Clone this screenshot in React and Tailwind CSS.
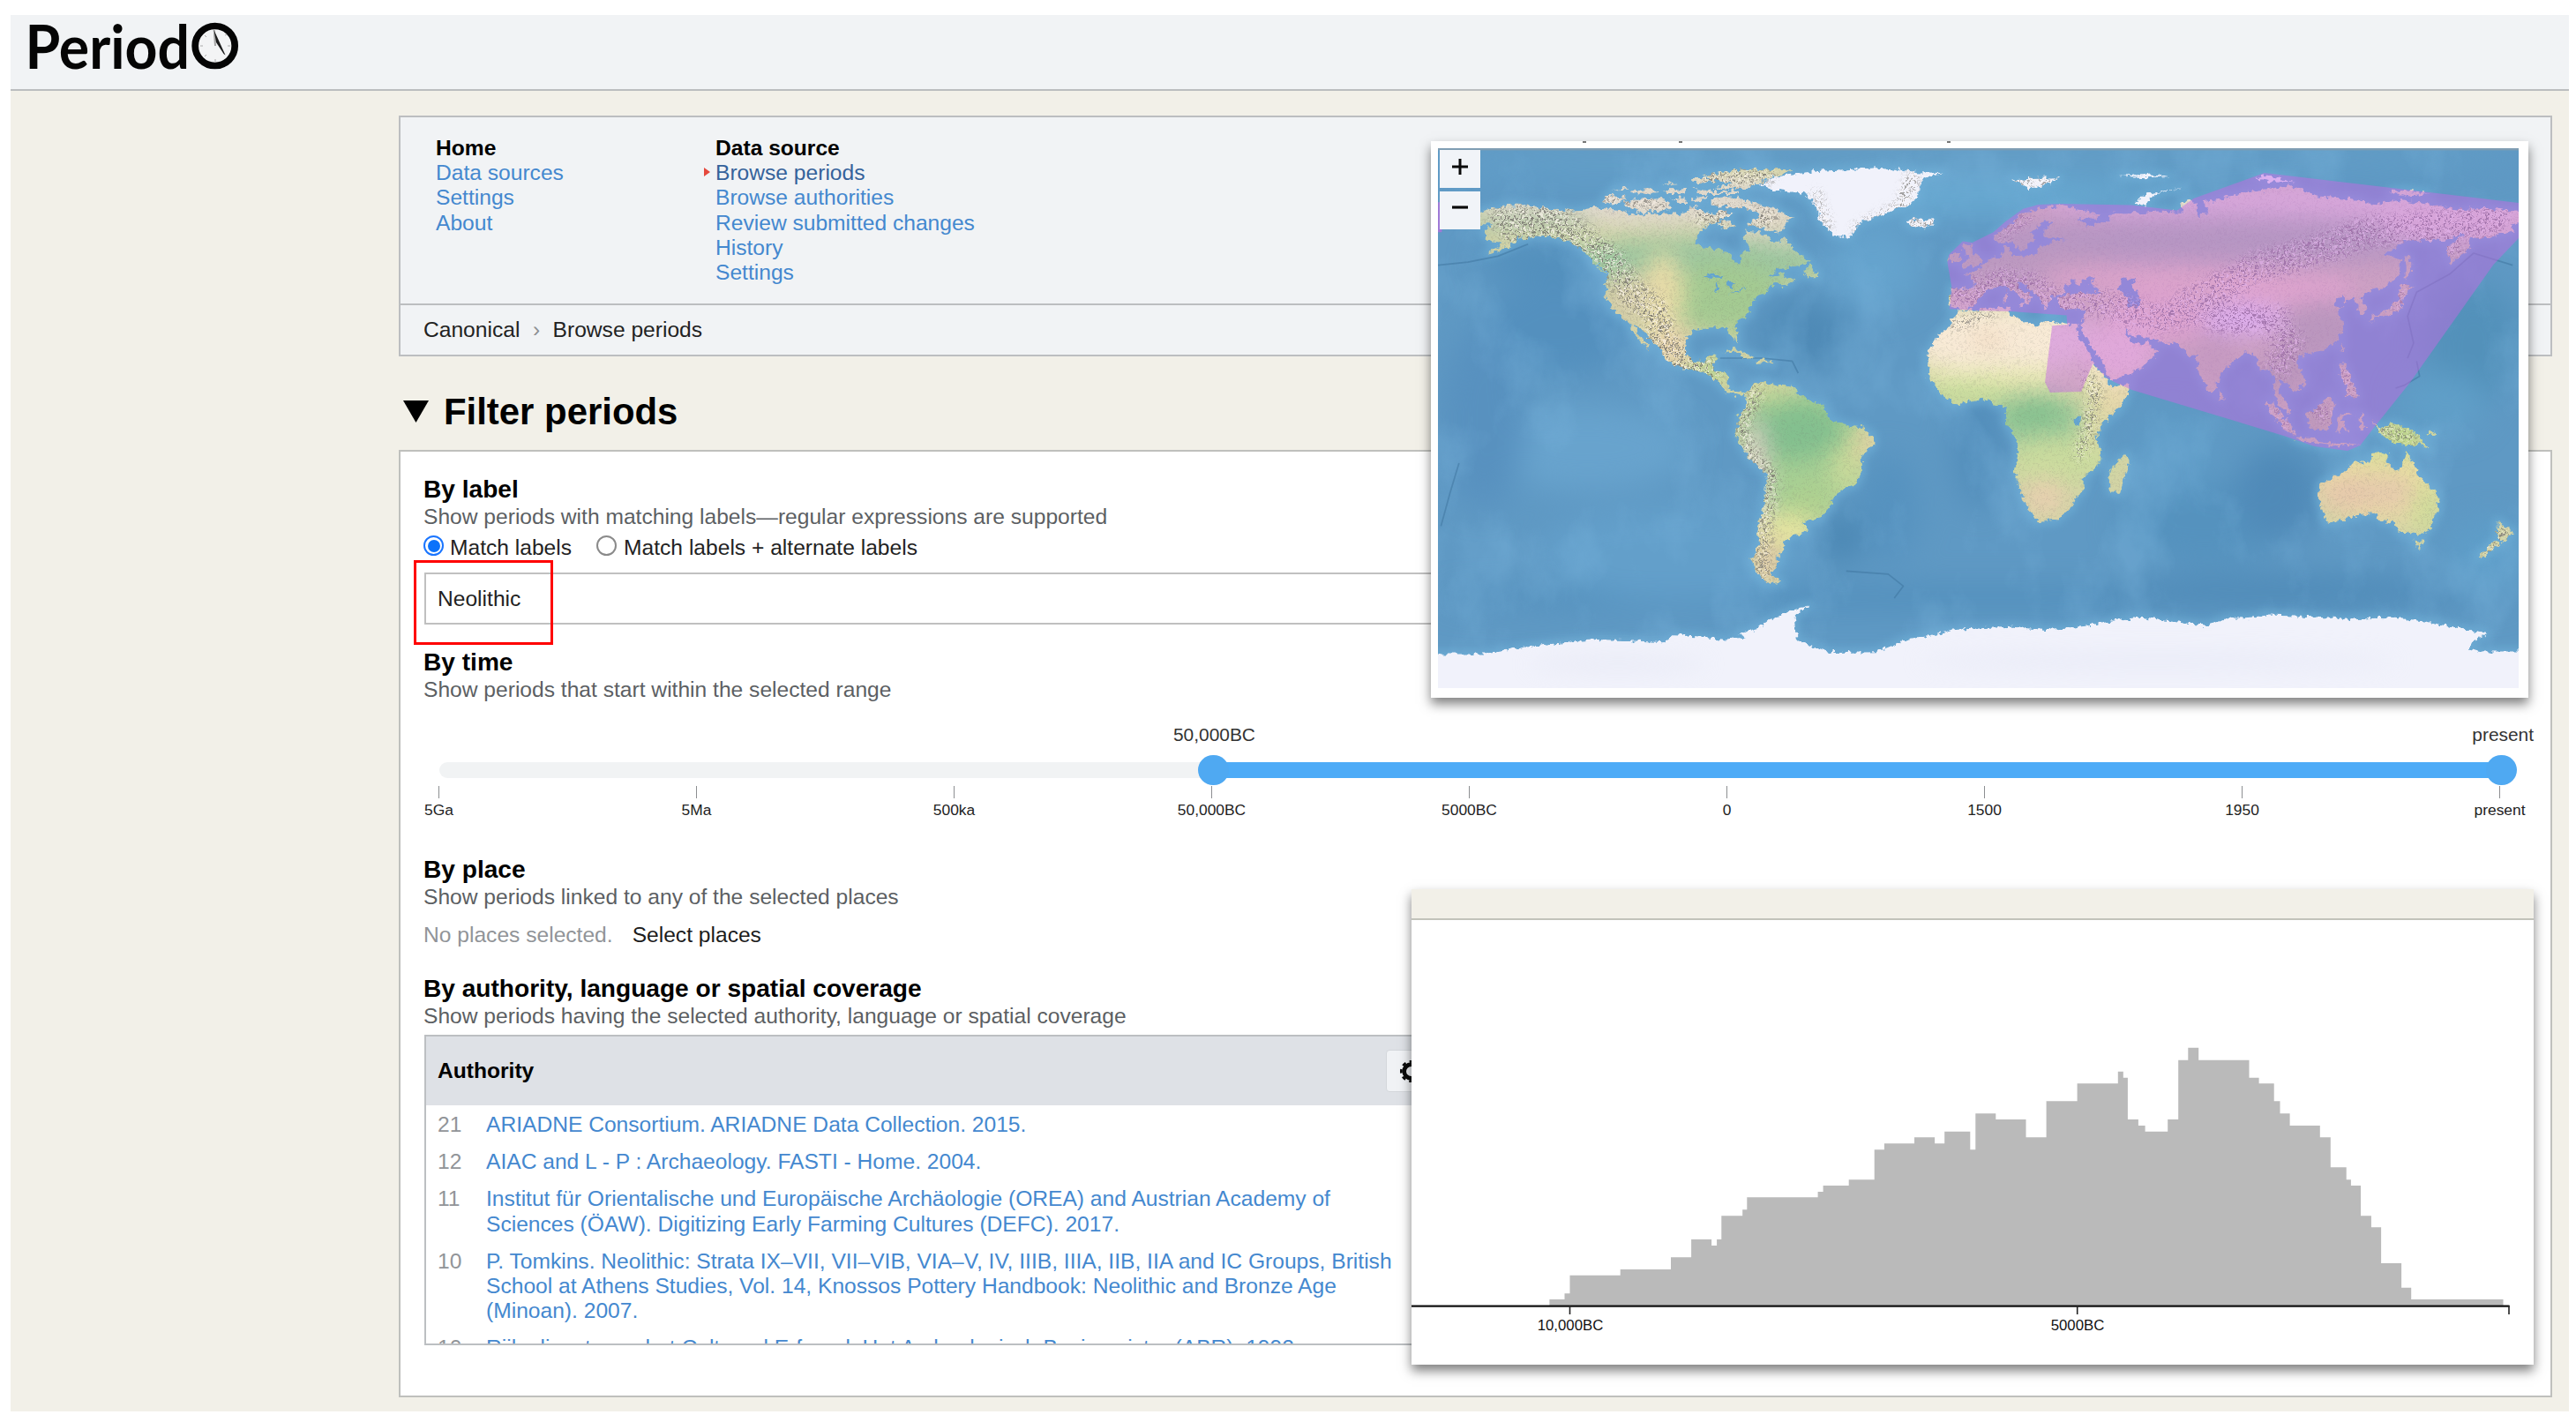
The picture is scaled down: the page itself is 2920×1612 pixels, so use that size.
import React from "react";

/* ---------- world map data: [lon, lat] outlines ---------- */
const LAND = [
  // North and Central America
  "-168,66 -166,68.5 -163,69.5 -156,71.2 -148,70.5 -141,69.8 -135,69 -128,70.3 -120,69.5 -115,68 -108,68 -104,68.3 -100,68 -96,69 -95,71.5 -92,69 -88,68 -85,69.5 -82,68 -86,66 -90,64 -93,62 -94.5,58.5 -92,57 -88,56.5 -82.5,55 -82,52.8 -79.5,51.3 -79,54.5 -76.5,56.5 -78,60 -77.5,62.4 -73,62 -70,60.5 -69,58.8 -66,59 -64.5,60.3 -62,57 -60,55 -56,52.5 -58,51.2 -64,50.2 -67,49.5 -70,47 -65,48.5 -64.5,46.5 -61,45.8 -65,43.6 -67,45 -70,43.5 -70.5,41.8 -74,40.5 -76,37 -76,35 -81,31.5 -80,27 -80.5,25.2 -82.5,28 -84,30 -89,30.2 -94,29.5 -97.3,27.5 -97.8,22.5 -95,18.5 -91,18.7 -90,21 -87,21.5 -88.5,16 -83.5,15 -83.8,11 -81,8.8 -77.5,8.5 -78,7.5 -80.5,7.4 -83.5,8.5 -87.5,12.8 -94,16 -99,16.8 -105,20 -105.5,22.8 -109,26 -112.5,30 -114.8,31.8 -113,28 -109.6,23 -112,24.8 -114.5,28 -117,32.5 -120.5,34.5 -122.5,37.5 -124.3,40.5 -124,46 -123,48.5 -127,51 -131,55 -135,58.5 -140,60 -147,61 -151,59.5 -153,61 -154,58.5 -158,56.5 -164,54.7 -158,58.5 -162,59 -165,61 -164.5,63.2 -161,64.5 -166,64.7",
  // Canadian Arctic
  "-61.5,66.5 -64,65.3 -66,62 -71,63 -77,64.5 -73,67 -73,68.5 -78,70 -82,70 -89,71 -89,73 -85,73.7 -80,73.6 -74,71.5 -68,70",
  "-117,70 -118,72 -114,73 -105,73.5 -102,70 -107,68.8 -113,68.6",
  "-125,72 -124,74.2 -117,73.5 -121,71.3",
  "-92,81 -80,83 -65,83 -62,82.5 -66,81 -72,79 -78,76.5 -89,76.5 -82,78 -86,79",
  "-95,76.5 -88,75.6 -80,75.8 -80,74.7 -92,74.7",
  "-102,73 -98,74 -97,71.5 -99,71.5",
  "-117,75.5 -110,76.5 -106,75 -112,74.7",
  "-122,76 -118,77 -116,76.3",
  "-105,76 -97,76.5 -98,75 -104,75",
  "-105,78.5 -100,78.2 -103,77.7",
  "-95,80 -88,80 -86,79.5 -90,78.4 -95,78.6",
  "-87,65 -84,66 -81,64 -84,63",
  "-95,73.5 -90,74 -91,72.5 -95,72",
  "-59,48 -56,51.5 -53,47 -56,47",
  "-128,50.7 -123.5,48.4 -125.5,48.8",
  // Caribbean
  "-85,22 -81,23.2 -74.5,20.2 -78,20 -80,21.8",
  "-74,18.3 -72.5,20 -68.5,18.5",
  // South America
  "-77.5,8.5 -75,11 -71.5,12.3 -68,11 -62,10.7 -60,8.5 -57,6 -51.5,4.3 -50,0 -44,-2.5 -39,-3 -35,-6 -35,-9 -39,-13 -39,-18 -41,-22 -45,-23.5 -48,-26 -49,-29 -53,-33.5 -58,-34.5 -57,-38 -62,-39 -65,-41 -65,-45 -67.5,-46.5 -66,-48 -69,-51 -68.5,-52.5 -65.5,-54.8 -70,-55 -74,-52 -75.5,-47 -73,-42 -73.5,-37 -71.5,-30 -70.3,-18.5 -76,-14 -79.5,-8 -81.2,-5 -80,-3 -80.5,0 -78.5,2 -77.2,5",
  // Africa
  "-6,35.8 0,36 10,37.2 11,34 15,32.3 19.5,30.5 22,32.8 30,31.2 34,31.3 32.5,29.8 35.5,24 37.2,21 38.5,18 43,12.5 44,10.5 51,11.8 48,4.5 42,-1.5 39.2,-5 40.5,-11 40.5,-15 35,-20 35,-24 32.8,-26 31,-29.8 26,-34 20,-34.7 18,-32.5 15,-27 12,-18 13.5,-11 12,-5.5 9,-1 9.5,4 6,4.3 3,6.4 -4,5.2 -8,4.5 -13,8.5 -17,14.5 -16.3,19.5 -17,21.5 -13,27.7 -9.8,30.5 -9,33",
  "49.3,-12 50.3,-16 47,-25 44,-24.5 43.5,-21 44.5,-16.5",
  // Eurasia
  "-9.4,37 -9.2,41 -9,43.5 -1.5,43.4 -1,46 -4.5,48.3 -1.5,48.7 2,51 5,53.3 8.3,54 8,57 10.5,57.6 11,54 19,54.5 21,57.2 24,58.8 29,59.8 22,60 22,63 25.5,65.3 22,65.8 17.5,62 18.8,60 16.5,57 14.2,55.5 11,59 7,58 5,61 10,64 14.5,68 22,70.3 29,71 41,67.5 39,66.2 33,66.7 36,64 40,64.8 44,66 44,68.3 54,68.5 60,69 68,68.5 67,71.5 70,73 73,71.3 73,67.5 77,68.5 75,72 80,73 87,75 98,76.3 104,77.6 113,74 127,73 131,71 140,72.7 152,71 160,69.7 170,70 182,69 182,65.3 177,64.5 179,62.5 170,60 164,60 163,56 157,51 155.8,57 163,62 155,59.2 143,59.3 135,54.8 141,53 140.5,48 135,43.5 131,42.8 127.5,39.8 129.4,37 129,35.3 126.5,34.5 126.7,37.5 124.8,39.8 121.5,39 121.5,40.8 118,39 119,37.2 122,37 119.5,35 121.8,31.5 121.5,28.5 118.5,24.5 114,22.4 108.5,21.5 106,19 109,12 106.5,9.5 105,8.7 103,11 100.8,13 100,9.3 103.3,4.5 103.8,1.5 101,3 98.5,8 98.7,13 97.3,16.6 94.5,16 92,21 89,22 86.8,20.5 82,16.5 80,13.5 79.5,10.5 77.6,8.1 75,12 73,17 72.7,21 70,20.9 67,24.6 62,25.2 57,26.8 51,27.8 48.5,30 51,25 54,24.3 56.3,26 56.7,24.2 59.7,22.5 57,18.8 52,15.5 45,12.8 43,14 42,18 39,21.5 35,28 34.7,29.5 34.3,31.3 36,36.6 30,36.3 27,37.2 26.5,40 30,41.2 35,42 41,41.4 37.5,45 39,47 35,46 33.5,44.5 31,46.5 28.5,43.5 28.5,41.2 24,40.8 23.8,37.8 22,36.6 19.5,41.5 14,45.2 12.3,44.5 18.4,40.2 16,38 13,41.3 9,44.3 3,43 0,39.5 -2,36.8 -5.5,36.2",
  "-5.5,50 1.3,51.3 1.5,53 -1.5,55 -2,57.5 -5,58.6 -5.5,56 -3,54 -4.5,52",
  "-10,52 -6,52.2 -6,55 -9.8,54.2",
  "130,31.5 131,34 136,35.7 140,39.5 141,45 145,43.5 141.5,41 141,36 137,34.7 132,33.5",
  "142,46 142,54 143.5,54 144.5,49",
  "120.2,23 121.8,25.2 121,22",
  "120.5,18.5 122,18.3 124,12.5 126.5,7 122,7.5 123,11 120.5,14",
  "95.5,5.5 98,4.5 104,-2 106,-5.8 102,-4 98,1",
  "105.5,-6.4 111,-6.4 115,-8.2 120,-8.5 127,-8.6 120,-9.5 108,-7.8",
  "109,1.5 111,2 117,7 119,5 116.5,-4 110.5,-3",
  "119.5,-5.5 120,1 125,1.5 121,0 123,-4.5 121,-3",
  "127.5,2 128.5,0.5 128,-3 130.5,-3.5 127,-3.5",
  "8.5,39 9.5,42.5 9.6,39", "12.5,37.8 15.5,38.2 15,36.8", "23.5,35.5 26.2,35.2", "80,9.5 81.8,7 80.5,6",
  // Oceania
  "131,-0.8 134.5,-3.3 138,-1.7 145,-4.3 150.5,-10.5 146,-8.5 143,-9.2 138,-8.4 133,-4",
  "114,-22 113.5,-26 115.5,-34.3 118,-35 124,-33 131,-31.5 135.5,-34.8 138,-34 140,-38 146.5,-39 150,-37.5 153.2,-31 153,-25.5 146.5,-19 145,-15 142.5,-10.8 141,-17 139,-17.5 135.5,-15 136.8,-12.2 132.5,-11.3 129.5,-14.8 125.5,-14.2 122,-18",
  "144.8,-40.8 148.2,-41 147,-43.5",
  "172.8,-34.5 178,-37.8 175,-41.5 173,-39",
  "172.5,-40.6 174,-42 168,-46.5 166.5,-46",
  "148.5,-5.8 152,-4.2 151.5,-5.6",
  "137,75.5 143,76 150,75 143,74",
];
const ICE = [
  "-73,78 -67,80.5 -55,82.3 -32,83.5 -20,82 -12,81.8 -18,80 -20,77 -20,74 -24,70.5 -32,68 -40,65 -43,60 -48,61 -53,66 -54,70.5 -58,75 -68,76",
  "-24,65.5 -22,66.4 -14.5,66 -15,64.3 -20,63.4 -22.7,64",
  "11,79.5 16,80 27,80.2 24,78.5 21,77 17,76.8",
  "47,80.7 58,81.3 64,80.6 56,80.2",
  "52,71.2 55,74.3 62,76 69,77 60,75.4 57,73 56,71",
  "92,80 96,81 105,78.8 99,78.6",
  "-184,-78.7 -164,-78.7 -151.7,-76.5 -140,-75 -127,-73.8 -116,-74.2 -104.7,-74.8 -102,-72.4 -92,-72.8 -84,-74 -77.5,-73.3 -80,-72 -73.8,-70.4 -70,-67.5 -66.4,-66 -62,-64 -56.5,-62.5 -60,-65 -61.4,-66.5 -61,-70 -60,-74.3 -52,-77.4 -47.8,-78.2 -34.2,-78 -30,-76.4 -25.5,-74.3 -16,-72.5 -8.2,-70.6 2,-70 11.5,-69.6 22,-70.6 28.9,-70.2 38.8,-68.9 46,-67.5 53.6,-66.3 63.5,-67.7 70,-68.5 75.9,-69.4 83.3,-66.7 90,-66.5 96.9,-65.7 110,-66.2 122,-67 132.7,-66.4 143,-67 152.5,-68.4 162,-70.5 169.8,-71.9 165,-74 163.5,-77 168,-77.8 184,-77.8 184,-95 -184,-95",
];
const LAKES = [
  "47,43 47.5,46.6 53,46.5 51,44.5 53.5,41.5 53.8,37 50,37.3 49.5,40.5",
  "-92,47 -88,48.7 -84.5,46.8", "-88,42 -87,45.5 -85.8,43", "-84,45.8 -81,45 -82.5,43.2", "-83,41.6 -79,43 -76.5,44 -79,42.4",
  "31.8,0.3 34,0.4 33.5,-2.5 31.9,-2",
];
const COVERAGE =
  "-9.6,36.4 -8.9,43.8 -10.3,52 -9.8,54.5 -5.2,59 -2,58.5 5,62 9,65.5 14.9,69.8 20,71.2 27.4,71.5 51,71 66.2,69.3 71.7,73.2 95.3,81.8 180,71.8 180,60 171.6,51.2 143.9,12 131.4,-3.7 127.2,-9.1 123,-10.9 112,-9.4 102.2,-6 50.9,9.5 45.4,12 42.6,13.6 38.2,18.2 34.3,8.8 23.9,8.5 22.2,12 24.6,30.8 29.6,31.2 29.4,34.3 10.7,35.6 0,35.9";

const flip = (s) => s.split(" ").map((p) => { const [a, b] = p.split(","); return `${a},${-parseFloat(b)}`; }).join(" ");

/* Soft climate zones: lon, lat, rx, ry, colour */
const ZONES = [
  [-110, 73, 60, 9, "#e0d9cd"], [-70, 62, 14, 6, "#ddd6c2"], [-150, 65, 22, 4, "#b6c8aa"], [-95, 52, 46, 8, "#9cc69f"], [-84, 40, 20, 12, "#a4ca92"],
  [-105, 42, 7, 13, "#e8dca8"], [-117, 40, 8, 9, "#d3cca8"], [-102, 24, 8, 7, "#e6d2aa"], [-89, 16, 7, 4, "#b4d28c"],
  [-58, -12, 24, 22, "#a6cf94"], [-62, -4, 17, 10, "#84c08f"], [-69, 8, 8, 3.5, "#c3d698"], [-38, -9, 4, 7, "#e0d2a2"], [-44, -17, 5, 9, "#c8d99a"], [-56, -29, 8, 8, "#aed090"], [-63, -37, 8, 6, "#e4e4a0"], [-70, -48, 5, 8, "#dcc8a4"], [-74, -18, 4, 18, "#dccfc4"],
  [8, 26, 34, 11, "#f8ead6"], [3, 26, 6, 3, "#f2dcc2"], [10, 13, 34, 3.5, "#e3e6ae"], [-5, 7.5, 16, 3, "#bcd996"], [20, -1, 17, 9, "#98c898"], [19, 2, 9, 5, "#86c18f"], [27, -14, 18, 8, "#cadb9e"], [22, -26, 7, 6, "#e8cfb0"], [46, 6, 6, 7, "#e8d8ac"], [38, -2, 4, 8, "#dcdaa4"],
  [110, 72, 90, 7, "#e8dfd2"], [80, 59, 90, 8, "#aac1a6"], [15, 50, 34, 7, "#b6c8a0"], [60, 47, 40, 4.5, "#f2dab4"], [60, 34, 18, 9, "#f2d6ba"], [100, 43, 26, 5, "#f7dabb"], [88, 33, 14, 5, "#f2ecf8"], [78, 20, 8, 10, "#c8c8a2"], [114, 29, 13, 10, "#b2c29c"], [102, 15, 8, 8, "#b0c098"], [47, 22, 12, 10, "#fce4d2"], [160, 64, 26, 5, "#ead9d0"],
  [113, 0, 5, 5, "#a8bc8c"], [141, -6, 9, 4, "#b2d484"],
  [133, -22, 22, 13, "#eae0a2"], [126, -25, 14, 7, "#e6c9ac"], [137, -25, 9, 7, "#e6ccac"], [149, -30, 4, 9, "#cfdd98"], [135, -13, 10, 2.5, "#d8dd9a"],
];
const SEA = [
  [-140, 30, 26, 16, "#5490be"], [-130, -10, 34, 14, "#68a3cd"], [-58, 28, 15, 12, "#4f8ab6"], [-165, 0, 14, 30, "#5891bf"], [-30, -30, 10, 18, "#5692bf"], [-46, -40, 7, 9, "#4a86b2"], [-35, 50, 16, 14, "#65a3cd"],
  [0, -10, 8, 20, "#528dba"], [75, -35, 28, 14, "#5592be"], [100, -25, 14, 16, "#508ab8"], [65, -12, 14, 14, "#5e9bc6"], [0, -60, 180, 4, "#528fbc"], [100, -58, 60, 6, "#508bb8"], [-100, -45, 46, 16, "#639fca"], [165, 25, 16, 20, "#5391ba"], [155, 5, 14, 10, "#609fc8"], [0, 74, 60, 6, "#68aad2"],
  [-130, 84, 60, 5, "#609dc8"], [100, 85, 80, 3, "#5c98c4"], [0, 87.5, 180, 2.5, "#68a2c8"], [170, -45, 14, 12, "#5e9dc8"], [-145, 52, 22, 6, "#528fbc"],
];
const RANGES = [
  ["-155,63 -135,62 -122,52 -116,42 -108,36 -105,25 -98,18 -90,15", 9],
  ["-160,67 -140,68 -130,60", 6],
  ["-74,9 -79,-3 -76,-12 -69,-19 -70,-30 -72,-45 -72,-53", 4],
  ["-8,43 0,42 8,46 20,43 24,38 38,39 48,36 60,33 72,36 95,33 104,26 100,18", 9],
  ["70,38 80,43 92,50 110,55 130,62 150,64 172,66", 10], ["80,33 100,33", 9], ["8,61 16,67", 3.5], ["140,36 141,44", 4], ["122,15 124,8", 4],
  ["36,14 39,9 37,-2 34,-12", 4], ["-8,31 4,35", 3], ["132,-3 145,-7", 3], ["112,3 116,1", 5], ["98,2 104,-4", 3], ["170,-44 175,-38", 4],
  ["-92,68 -70,67", 6], ["-90,80 -70,81", 5], ["152,60 160,56", 5], ["-22,80 -26,70 -40,63", 4], ["-54,75 -50,64", 2.5], ["-24,65 -14,65", 3],
  ["12,79 26,79", 3], ["-124,73 -105,71", 3],
];

function WorldMap() {
  return (
    <svg className="block h-[612px] w-[1225px]" viewBox="-180 -90 360 180" preserveAspectRatio="none">
      <defs>
        <filter id="coast" filterUnits="userSpaceOnUse" x="-185" y="-95" width="370" height="190" colorInterpolationFilters="sRGB">
          <feTurbulence type="fractalNoise" baseFrequency="0.6" numOctaves="2" seed="4" result="n" />
          <feDisplacementMap in="SourceGraphic" in2="n" scale="2.8" xChannelSelector="R" yChannelSelector="G" />
        </filter>
        <filter id="soft" filterUnits="userSpaceOnUse" x="-200" y="-110" width="400" height="220" colorInterpolationFilters="sRGB"><feGaussianBlur stdDeviation="3.6" /></filter>
        <filter id="softer" filterUnits="userSpaceOnUse" x="-200" y="-110" width="400" height="220" colorInterpolationFilters="sRGB"><feGaussianBlur stdDeviation="5" /></filter>
        <filter id="shelf" filterUnits="userSpaceOnUse" x="-200" y="-110" width="400" height="220" colorInterpolationFilters="sRGB"><feGaussianBlur stdDeviation="1.4" /></filter>
        <filter id="speck" filterUnits="userSpaceOnUse" x="-180" y="-90" width="360" height="180" colorInterpolationFilters="sRGB">
          <feTurbulence type="fractalNoise" baseFrequency="1.5" numOctaves="2" seed="9" />
          <feColorMatrix values="0 0 0 0 0.45  0 0 0 0 0.44  0 0 0 0 0.42  9 0 0 0 -4.8" />
        </filter>
        <filter id="glint" filterUnits="userSpaceOnUse" x="-180" y="-90" width="360" height="180" colorInterpolationFilters="sRGB">
          <feTurbulence type="fractalNoise" baseFrequency="1.3" numOctaves="2" seed="23" />
          <feColorMatrix values="0 0 0 0 1  0 0 0 0 0.97  0 0 0 0 0.95  9 0 0 0 -4.8" />
        </filter>
        <filter id="relief" filterUnits="userSpaceOnUse" x="-180" y="-90" width="360" height="180" colorInterpolationFilters="sRGB">
          <feTurbulence type="fractalNoise" baseFrequency="0.045 0.03" numOctaves="7" seed="12" />
          <feColorMatrix values="0 0 0 0 0.47  0 0 0 0 0.7  0 0 0 0 0.86  3 0 0 0 -1.45" />
        </filter>
        <clipPath id="landClip">{LAND.map((p, i) => <polygon key={i} points={flip(p)} />)}</clipPath>
        <mask id="rangeMask" maskUnits="userSpaceOnUse" x="-180" y="-90" width="360" height="180">
          <g fill="none" stroke="#fff" strokeLinejoin="round" strokeLinecap="round" filter="url(#shelf)">
            {RANGES.map(([p, w], i) => <polyline key={i} points={flip(p)} strokeWidth={w} />)}
          </g>
        </mask>
        <clipPath id="solidClip">{[...LAND, ...ICE.slice(0, 6)].map((p, i) => <polygon key={i} points={flip(p)} />)}</clipPath>
      </defs>
      <rect x="-180" y="-90" width="360" height="180" fill="#5f99c4" />
      <g filter="url(#softer)">{SEA.map(([x, y, rx, ry, c], i) => <ellipse key={i} cx={x} cy={-y} rx={rx} ry={ry} fill={c} />)}</g>
      <g filter="url(#shelf)" fill="#6eaed6" stroke="#6eaed6" strokeWidth="3" strokeLinejoin="round" opacity="0.7">
        {[...LAND, ...ICE].map((p, i) => <polygon key={i} points={flip(p)} />)}
      </g>
      <rect x="-180" y="-90" width="360" height="180" filter="url(#relief)" opacity="0.4" />
      <g fill="none" stroke="#3c719c" strokeWidth="0.5" opacity="0.5" strokeLinejoin="round">
        <polyline points={flip("-180,51 -170,52 -160,54 -150,58")} />
        <polyline points={flip("178,51 165,55 157,48 146,42 143,34 145,25 143,20")} />
        <polyline points={flip("146,19 147,14 142,11 139,10")} />
        <polyline points={flip("-86,20 -72,20 -62,19 -60,15")} />
        <polyline points={flip("-44,-51 -30,-52 -25,-56 -28,-60")} />
        <polyline points={flip("-173,-15 -176,-25 -179,-36")} />
      </g>
      <g filter="url(#coast)">
        <g clipPath="url(#landClip)">
          <rect x="-185" y="-95" width="370" height="190" fill="#d3d4a6" />
          <g filter="url(#soft)">{ZONES.map(([x, y, rx, ry, c], i) => <ellipse key={i} cx={x} cy={-y} rx={rx} ry={ry} fill={c} />)}</g>
          <rect x="-180" y="-90" width="360" height="180" filter="url(#speck)" opacity="0.1" />
        </g>
        <g fill="#f1f2fb">{ICE.map((p, i) => <polygon key={i} points={flip(p)} />)}</g>
        <g fill="#64a4cf">{LAKES.map((p, i) => <polygon key={i} points={flip(p)} />)}</g>
        <g clipPath="url(#solidClip)">
          <g mask="url(#rangeMask)">
            <rect x="-180" y="-90" width="360" height="180" filter="url(#glint)" opacity="0.65" />
            <rect x="-180" y="-90" width="360" height="180" filter="url(#speck)" opacity="0.8" />
          </g>
        </g>
      </g>
      <g filter="url(#soft)" opacity="0.4">
        <ellipse cx="-120" cy="82" rx="30" ry="3" fill="#dfe2f0" /><ellipse cx="60" cy="81" rx="80" ry="4" fill="#e2e5f4" />
      </g>
      <polygon points={flip(COVERAGE)} fill="#c46be2" opacity="0.49" />
      <rect x="-180" y="-72" width="1.3" height="10" fill="#ca66e4" opacity="0.6" />
      <rect x="-180" y="-90" width="360" height="0.7" fill="#7f9db3" />
    </svg>
  );
}

/* ---------- histogram ---------- */
const STEPS = [
  [206, 939], [226, 919], [233, 857], [300, 837], [367, 796], [394, 735], [421, 756], [428, 735], [434, 655], [462, 634], [468, 592],
  [562, 573], [569, 552], [603, 532], [637, 430], [650, 409], [690, 388], [717, 409], [730, 368], [764, 430], [771, 307], [798, 327],
  [838, 388], [865, 265], [906, 205], [960, 164], [967, 185], [973, 327], [987, 348], [996, 368], [1026, 327], [1040, 125], [1053, 83],
  [1067, 125], [1134, 185], [1147, 205], [1167, 265], [1175, 307], [1188, 348], [1228, 388], [1242, 490], [1263, 532], [1269, 552],
  [1282, 655], [1296, 694], [1309, 816], [1336, 899], [1349, 939], [1471, 961],
];
const sx = (x) => ((x - 23) / 1.1701).toFixed(1);
const sy = (y) => (y / 3 + 117).toFixed(1);
const histPath = `M${sx(206)} ${sy(961)}` + STEPS.map(([x, y]) => `H${sx(x)}V${sy(y)}`).join("") + "Z";

function Histogram() {
  return (
    <svg className="block h-[504px] w-[1272px]" viewBox="0 0 1272 504">
      <path d={histPath} fill="#bababa" />
      <path d="M0 437.7H1244.5" stroke="#111" strokeWidth="2.2" fill="none" />
      <path d="M179.5 437V447M754.7 437V447M1244 437V447" stroke="#222" strokeWidth="1.6" fill="none" />
      <g fontFamily="Liberation Sans, Arial, sans-serif" fontSize="16.8" fill="#111" textAnchor="middle">
        <text x="180" y="465">10,000BC</text>
        <text x="755" y="465">5000BC</text>
      </g>
    </svg>
  );
}

function Logo() {
  return (
    <svg className="ml-[12px] block h-[84px] w-[260px] overflow-visible" viewBox="24 17 260 84">
      <text x="28.500" y="78" fontFamily="Lato, sans-serif" fontWeight="700" fontSize="68.500" textLength="186.500" lengthAdjust="spacingAndGlyphs" fill="#050505">Period</text>
      <circle cx="243.700" cy="52" r="22.500" fill="#f3f4f5" stroke="#050505" strokeWidth="7.700" />
      <path d="M242.700 34L244 52" stroke="#a5a5a5" strokeWidth="2" />
      <path d="M242.500 34L248 46L255.500 62.500L253.500 61L245 48Z" fill="#1c1c1c" />
      <path d="M244 67V70M227 52H230M258 52H261M232 64L234 62M232 40L234 42M255 40L257 39" stroke="#aaa" strokeWidth="1" />
    </svg>
  );
}

const TICKS = ["5Ga", "5Ma", "500ka", "50,000BC", "5000BC", "0", "1500", "1950", "present"];
const ROWS = [
  ["21", "ARIADNE Consortium. ARIADNE Data Collection. 2015."],
  ["12", "AIAC and L - P : Archaeology. FASTI - Home. 2004."],
  ["11", "Institut für Orientalische und Europäische Archäologie (OREA) and Austrian Academy of Sciences (ÖAW). Digitizing Early Farming Cultures (DEFC). 2017."],
  ["10", "P. Tomkins. Neolithic: Strata IX–VII, VII–VIB, VIA–V, IV, IIIB, IIIA, IIB, IIA and IC Groups, British School at Athens Studies, Vol. 14, Knossos Pottery Handbook: Neolithic and Bronze Age (Minoan). 2007."],
  ["10", "Rijksdienst voor het Cultureel Erfgoed. Het Archeologisch Basisregister (ABR). 1992."],
];

function Section({ title, hint }) {
  return (
    <>
      <h2 className="text-[28.1px] leading-[34px] font-bold text-black">{title}</h2>
      <p className="text-[#5c5f63]">{hint}</p>
    </>
  );
}

function Radio({ on }) {
  return (
    <span className={on
      ? "-mt-[5px] flex size-[23px] items-center justify-center rounded-full border-2 border-[#1a75ff] bg-white"
      : "-mt-[5px] flex size-[23px] items-center justify-center rounded-full border-2 border-[#8a8a8a] bg-white"}>
      {on && <span className="size-[14px] rounded-full bg-[#0b72fa]" />}
    </span>
  );
}

export default function App() {
  return (
    <div className="relative h-[1612px] w-[2920px] overflow-hidden bg-white pt-[17px] pl-[12px] font-['Liberation_Sans',Arial,sans-serif] text-[24.6px] leading-[28.2px]">
      <div className="h-[1583px] w-[2900px] bg-[#f2f0e8]">
        <header className="h-[86px] border-b-2 border-[#bbbdbf] bg-[#f1f3f5]">
          <Logo />
        </header>

        <div className="ml-[440px] w-[2441px] pt-[28px]">
          <nav className="h-[273px] border-2 border-[#bcbec0] bg-[#f1f3f5]">
            <div className="flex h-[211px] pt-[21px] pl-[40px]">
              <div className="w-[317px]">
                <div className="font-bold text-black">Home</div>
                <div className="text-[#4488cf]">Data sources</div>
                <div className="text-[#4488cf]">Settings</div>
                <div className="text-[#4488cf]">About</div>
              </div>
              <div>
                <div className="font-bold text-black">Data source</div>
                <div className="-ml-[13px] flex items-center text-[#35629b]">
                  <svg className="-mt-[2px] mr-[6px] h-[10px] w-[7px]" viewBox="0 0 7 10"><path d="M0 0L7 5L0 10Z" fill="#e5483c" /></svg>
                  Browse periods
                </div>
                <div className="text-[#4488cf]">Browse authorities</div>
                <div className="text-[#4488cf]">Review submitted changes</div>
                <div className="text-[#4488cf]">History</div>
                <div className="text-[#4488cf]">Settings</div>
              </div>
            </div>
            <div className="flex h-[58px] items-center border-t-2 border-[#bcbec0] pl-[26px] text-[#222]">
              <span>Canonical</span>
              <span className="mx-[14.500px] text-[#8d8f92]">›</span>
              <span>Browse periods</span>
            </div>
          </nav>

          <div className="flex h-[106px] items-center gap-[17px] pl-[5px]">
            <svg className="mt-[18px] h-[25px] w-[29px]" viewBox="0 0 29 25"><path d="M0 0H29L14.500 25Z" fill="#000" /></svg>
            <h1 className="mt-[20px] text-[41.9px] leading-[48px] font-bold text-black">Filter periods</h1>
          </div>

          <main className="h-[1074px] border-2 border-[#bfc0bd] bg-white pt-[26px] pl-[26px]">
            <Section title="By label" hint="Show periods with matching labels—regular expressions are supported" />
            <div className="mt-[7px] flex h-[28px] items-center text-[#222]">
              <Radio on />
              <span className="ml-[7px]">Match labels</span>
              <span className="ml-[28px]"><Radio /></span>
              <span className="ml-[8px]">Match labels + alternate labels</span>
            </div>
            <div className="relative mt-[14px] ml-px flex h-[59px] w-[2382px] items-center border-2 border-[#c0c0c0] bg-white pl-[13px] text-[#222]">
              Neolithic
              <span className="absolute -top-[16px] -left-[14px] h-[96px] w-[158px] border-[3px] border-[#ff0000]" />
            </div>

            <div className="mt-[26px]"><Section title="By time" hint="Show periods that start within the selected range" /></div>
            <div className="mt-[25px] flex justify-between pr-[19px] pl-[850px] text-[20.9px] leading-[24px] text-[#333]">
              <span>50,000BC</span>
              <span>present</span>
            </div>
            <div className="relative mt-[19px] ml-[18px] flex h-[18px] w-[2338px] items-center rounded-full bg-[#f1f3f4]">
              <div className="ml-[877px] h-full flex-1 bg-[#4dabf7]" />
              <span className="absolute -top-[8.500px] left-[860px] size-[34.500px] rounded-full bg-[#4fa9f2]" />
              <span className="absolute -top-[8.500px] left-[2320px] size-[34.500px] rounded-full bg-[#4fa9f2]" />
            </div>
            <div className="mt-[9px] ml-[17px] flex w-[2337px] justify-between">
              {TICKS.map((t) => (
                <div key={t} className="flex w-px flex-col items-center">
                  <span className="h-[14px] w-px bg-[#8c8e91]" />
                  <span className="mt-[3px] text-[17.400px] leading-[20px] whitespace-nowrap text-[#222]">{t}</span>
                </div>
              ))}
            </div>

            <div className="mt-[41px]"><Section title="By place" hint="Show periods linked to any of the selected places" /></div>
            <div className="mt-[14px] flex gap-[22px]">
              <span className="text-[#919498]">No places selected.</span>
              <span className="text-[#1c1c1c]">Select places</span>
            </div>

            <div className="mt-[30px]"><Section title="By authority, language or spatial coverage" hint="Show periods having the selected authority, language or spatial coverage" /></div>
            <div className="mt-[7px] ml-px h-[352px] w-[1160px] overflow-hidden border-2 border-[#bcbfc2]">
              <div className="flex h-[78px] items-center justify-between bg-[#dee1e6] pr-[16px] pl-[13px]">
                <span className="font-bold text-black">Authority</span>
                <span className="flex h-[48px] w-[52px] items-center justify-center rounded-[4px] border border-[#d3d7db] bg-[#f0f2f5]">
                  <svg className="ml-[4px] h-[27px] w-[25px]" viewBox="0 0 24 24">
                    <circle cx="12" cy="12" r="7.500" fill="none" stroke="#0a0a0a" strokeWidth="4.500" />
                    <circle cx="12" cy="12" r="10.700" fill="none" stroke="#0a0a0a" strokeWidth="2.600" strokeDasharray="4.200 4.203" strokeDashoffset="2.100" />
                  </svg>
                </span>
              </div>
              <div className="flex flex-col gap-[14px] pt-[8px] pl-[13px]">
                {ROWS.map(([n, t], i) => (
                  <div key={i} className="flex">
                    <span className="w-[55px] shrink-0 text-[#919498]">{n}</span>
                    <span className="w-[1048px] text-[#4488cf]">{t}</span>
                  </div>
                ))}
              </div>
            </div>
          </main>
        </div>
      </div>

      {/* floating map card */}
      <div className="absolute top-[160px] left-[1622px] h-[631px] w-[1244px] bg-white pt-[8px] pl-[8px] shadow-[0_7px_12px_rgba(0,0,0,0.5)]">
        <WorldMap />
        <div className="absolute top-[10px] left-[10px] flex flex-col gap-[4px]">
          <span className="flex h-[43px] w-[46px] justify-center bg-[#f1f4f8] pt-[10px]"><svg className="size-[18px]" viewBox="0 0 18 18"><path d="M9 0V18M0 9H18" stroke="#0a0a0a" strokeWidth="3" /></svg></span>
          <span className="flex h-[43px] w-[46px] justify-center bg-[#f1f4f8] pt-[9px]"><svg className="size-[18px]" viewBox="0 0 18 18"><path d="M0 9H18" stroke="#0a0a0a" strokeWidth="3.200" /></svg></span>
        </div>
        <span className="absolute top-0 left-[172px] h-[2px] w-[4px] bg-[#777]" />
        <span className="absolute top-0 left-[281px] h-[2px] w-[4px] bg-[#777]" />
        <span className="absolute top-0 left-[585px] h-[2px] w-[4px] bg-[#777]" />
      </div>

      {/* floating histogram card */}
      <div className="absolute top-[1008px] left-[1600px] h-[539px] w-[1272px] bg-white shadow-[0_7px_12px_rgba(0,0,0,0.5)]">
        <div className="h-[35px] border-b-2 border-[#c2c3ba] bg-[#f2f0e8]" />
        <Histogram />
      </div>
    </div>
  );
}
